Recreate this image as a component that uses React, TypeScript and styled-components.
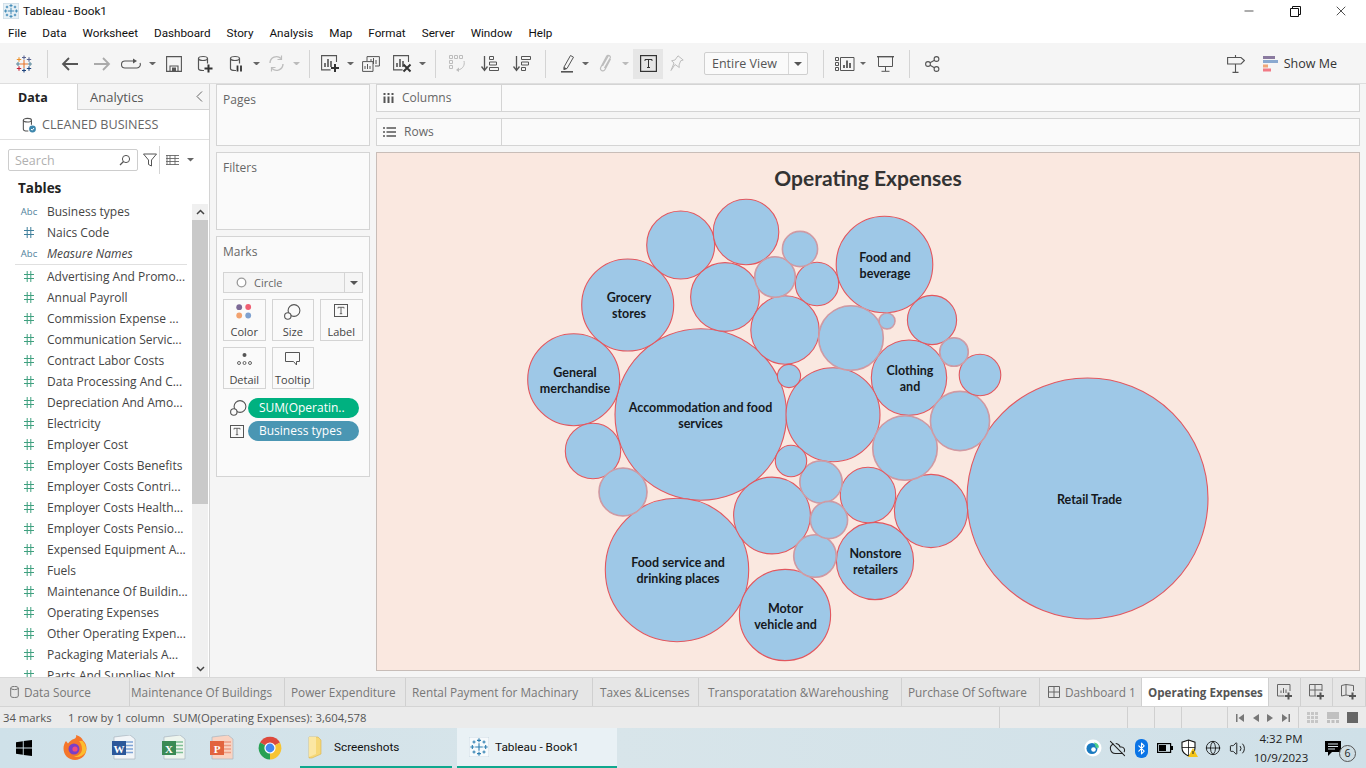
import React from 'react';
import styled, { createGlobalStyle } from 'styled-components';
import { Bluetooth, CloudOff, Globe, Volume2, Minus, X } from 'lucide-react';

const GlobalStyle = createGlobalStyle`
  html, body { margin: 0; padding: 0; background: #fff; }
  * { box-sizing: border-box; }
  body { font-family: 'Open Sans', 'Noto Sans', sans-serif; font-size: 12px; color: #333; }
`;

const Page = styled.div`
  width: 1366px; height: 768px; display: flex; flex-direction: column; overflow: hidden;
`;

/* ---------- window chrome ---------- */
const TitleBar = styled.div`
  height: 22px; display: flex; align-items: center; padding-left: 3px; background: #fff; color: #111;
  font-family: Roboto, sans-serif; font-size: 11.8px;
  & > svg { margin-right: 4px; }
`;
const WindowControls = styled.div`margin-left: auto; display: flex; height: 22px; padding-right: 2px;`;
const WindowButton = styled.div`width: 46px; display: flex; align-items: center; justify-content: center;`;
const MenuBar = styled.div`
  height: 21px; display: flex; align-items: center; padding-left: 8px; gap: 16px; background: #fff; color: #111;
  font-family: Roboto, sans-serif; font-size: 11.7px;
`;

const Toolbar = styled.div`height: 41px; display: flex; align-items: center; background: #f5f5f5; border-bottom: 1px solid #dedede; padding: 1px 29px 0 0;`;
const Tool = styled.div<{ $w: number; $active?: boolean }>`
  width: ${p => p.$w}px; height: 30px; flex: none; display: flex; align-items: center; justify-content: center;
  background: ${p => (p.$active ? '#e6e6e6' : 'transparent')};
`;
const Gap = styled.div<{ $w: number }>`width: ${p => p.$w}px; flex: none;`;
const Sep = styled.div`width: 1px; height: 28px; background: #d4d4d4; flex: none;`;
const ViewSelect = styled.div`
  width: 104px; height: 23px; flex: none; display: flex; background: #fafafa; border: 1px solid #cfcfcf; border-radius: 2px;
  color: #555; font-size: 12.5px; line-height: 21px;
`;
const ViewSelectText = styled.div`width: 84px; padding-left: 7px; border-right: 1px solid #d8d8d8;`;
const ViewSelectArrow = styled.div`flex: 1; display: flex; align-items: center; justify-content: center;`;
const ToolbarRight = styled.div`margin-left: auto; display: flex; align-items: center; color: #333; font-size: 12.5px;`;
const ShowMe = styled.div`display: flex; align-items: center; gap: 6px; margin-left: 18px;`;

/* ---------- workspace ---------- */
const Main = styled.div`flex: 1; display: flex; min-height: 0; background: #f5f5f5;`;
const DataPane = styled.div`width: 210px; flex: none; display: flex; flex-direction: column; background: #fff; border-right: 1px solid #d4d4d4;`;
const PaneTabs = styled.div`height: 26px; display: flex;`;
const PaneTab = styled.div<{ $w?: number; $active?: boolean }>`
  width: ${p => (p.$w ? `${p.$w}px` : 'auto')}; flex: ${p => (p.$w ? 'none' : 1)};
  display: flex; align-items: center;
  padding-left: ${p => (p.$active ? 18 : 12)}px;
  font-size: ${p => (p.$active ? 12.5 : 13)}px;
  font-weight: ${p => (p.$active ? 700 : 400)}; color: ${p => (p.$active ? '#222' : '#555')};
  background: ${p => (p.$active ? '#fff' : '#f5f5f5')};
  border-left: ${p => (p.$active ? 'none' : '1px solid #d4d4d4')};
  border-bottom: ${p => (p.$active ? 'none' : '1px solid #d4d4d4')};
`;
const Collapse = styled.div`margin-left: auto; margin-right: 6px; display: flex;`;
const Connection = styled.div`height: 30px; display: flex; align-items: center; padding-left: 22px; gap: 5px; border-bottom: 1px solid #e0e0e0; color: #666; font-size: 12.6px;`;
const SearchRow = styled.div`height: 41px; display: flex; align-items: center; padding: 0 0 1px 8px;`;
const SearchBox = styled.div`
  width: 130px; height: 22px; display: flex; align-items: center; justify-content: space-between; padding: 0 6px;
  border: 1px solid #cdcdcd; border-radius: 2px; color: #b0b0b0; font-size: 12.5px;
`;
const SearchTools = styled.div`display: flex; align-items: center; margin-left: 3px;`;
const TablesHeading = styled.div`height: 20px; padding-left: 18px; margin-top: -5px; line-height: 24px; font-size: 13.5px; font-weight: 700; color: #222;`;
const FieldsArea = styled.div`flex: 1; min-height: 0; display: flex; overflow: hidden; margin-top: 5px;`;
const FieldList = styled.div`flex: 1; min-width: 0; overflow: hidden;`;
const FieldRow = styled.div<{ $italic?: boolean }>`
  height: 21px; display: flex; align-items: center; color: #444; white-space: nowrap; font-size: 12px;
  font-style: ${p => (p.$italic ? 'italic' : 'normal')};
`;
const FieldIcon = styled.span<{ $color: string; $abc?: boolean }>`
  width: 47px; flex: none; display: flex; justify-content: center; padding-left: 15px; padding-right: 4px; color: ${p => p.$color};
  font-size: 9.5px; font-style: normal; font-weight: 500;
`;
const FieldDivider = styled.div`height: 2px; width: 172px; margin-left: 15px; position: relative; &::after { content: ''; position: absolute; left: 0; right: 0; top: 0; height: 1px; background: #e0e0e0; }`;
const Scrollbar = styled.div`width: 16px; flex: none; background: #f0f0f0; margin-right: 1px; display: flex; flex-direction: column; align-items: center; margin-top: 3px;`;
const ScrollArrow = styled.div`height: 16px; display: flex; align-items: center; justify-content: center; flex: none;`;
const ScrollThumb = styled.div`width: 100%; height: 284px; background: #c9c9c9; flex: none;`;
const ScrollFill = styled.div`flex: 1;`;

const CardsColumn = styled.div`width: 160px; flex: none; padding: 0 0 0 6px; display: flex; flex-direction: column; gap: 6px;`;
const Card = styled.div<{ $h: number }>`
  width: 154px; height: ${p => p.$h}px; background: #fafafa; border: 1px solid #d4d4d4; padding: 8px 6px; color: #666; font-size: 12px; flex: none;
`;
const CardTitle = styled.div`padding-left: 0; line-height: 14px;`;
const MarkSelect = styled.div`
  margin-top: 13px; height: 21px; display: flex; align-items: center; background: #f5f5f5; border: 1px solid #d4d4d4; color: #666; font-size: 11px;
`;
const MarkSelectBody = styled.div`flex: 1; display: flex; align-items: center; gap: 7px; padding-left: 12px; height: 100%;`;
const MarkSelectArrow = styled.div`width: 18px; height: 100%; border-left: 1px solid #d4d4d4; display: flex; align-items: center; justify-content: center;`;
const MarkGrid = styled.div`display: grid; grid-template-columns: repeat(3, 42.5px); column-gap: 6px; row-gap: 6px; margin-top: 6px;`;
const MarkButton = styled.div`
  height: 42px; border: 1px solid #d4d4d4; display: flex; flex-direction: column; align-items: center; justify-content: space-between;
  padding: 4px 0 1px; font-size: 11px; color: #444; background: #fafafa; line-height: 14px;
`;
const PillRow = styled.div`display: flex; align-items: center; height: 20px; margin-top: 3px; &:first-of-type { margin-top: 0; }`;
const PillIcon = styled.div`width: 25px; padding-left: 7px; flex: none; display: flex; align-items: center;`;
const Pill = styled.div<{ $color: string }>`
  width: 111px; height: 20px; border-radius: 10px; background: ${p => p.$color}; color: #fff; font-size: 12px; line-height: 19px; padding-left: 11px; white-space: nowrap;
`;
const Pills = styled.div`margin-top: 9px;`;

const ViewColumn = styled.div`flex: 1; min-width: 0; padding: 0 6px; display: flex; flex-direction: column; gap: 6px;`;
const Shelf = styled.div`height: 28px; display: flex; background: #fafafa; border: 1px solid #d4d4d4; flex: none;`;
const ShelfLabel = styled.div`width: 125px; display: flex; align-items: center; gap: 8px; padding: 0 0 1px 6px; border-right: 1px solid #d4d4d4; color: #666; font-size: 12px;`;
const Viz = styled.div`height: 519px; flex: none; background: #fae8e0; border: 1px solid #c8bdb8; display: flex; flex-direction: column; overflow: hidden;`;
const VizTitle = styled.div`height: 45px; flex: none; text-align: center; font-family: Lato, 'Open Sans', sans-serif; font-weight: 700; font-size: 21px; line-height: 50px; color: #333;`;
const BubbleChart = styled.svg`display: block; flex: 1; width: 100%; min-height: 0;`;
const BubbleLabel = styled.text`font-family: Lato, 'Open Sans', sans-serif; font-weight: 700; font-size: 12.5px; fill: #15191d; text-anchor: middle;`;

/* ---------- sheet tabs + status ---------- */
const SheetTabs = styled.div`height: 30px; display: flex; background: #e6e6e6; border-top: 1px solid #d8d8d8; border-bottom: 1px solid #d4d4d4;`;
const SheetTab = styled.div<{ $w: number; $pad: number; $active?: boolean }>`
  width: ${p => p.$w}px; flex: none; display: flex; align-items: center; gap: 5px; white-space: nowrap; overflow: hidden;
  padding-left: ${p => p.$pad}px; border-right: 1px solid #d0d0d0;
  font-size: ${p => (p.$active ? 11.6 : 11.8)}px;
  background: ${p => (p.$active ? '#fff' : 'transparent')}; color: ${p => (p.$active ? '#555' : '#777')};
  font-weight: ${p => (p.$active ? 700 : 400)};
`;
const AddTab = styled.div<{ $w: number }>`width: ${p => p.$w}px; flex: none; display: flex; align-items: center; justify-content: center; border-right: 1px solid #d0d0d0;`;
const StatusBar = styled.div`height: 21px; display: flex; background: #ebebeb; font-size: 11.3px; color: #555;`;
const StatusMain = styled.div`width: 999px; flex: none; display: flex; align-items: center; padding-left: 3px;`;
const StatusText = styled.span<{ $w?: number }>`width: ${p => (p.$w ? `${p.$w}px` : 'auto')}; white-space: nowrap; flex: none;`;
const StatusCell = styled.div<{ $w: number }>`
  width: ${p => p.$w}px; flex: none; border-left: 1px solid #d0d0d0; display: flex; align-items: center; justify-content: space-evenly;
`;
const NavGlyph = styled.div<{ $size: number; $color: string }>`width: ${p => p.$size}px; height: ${p => p.$size}px; background: ${p => p.$color};`;

/* ---------- taskbar ---------- */
const Taskbar = styled.div`height: 40px; display: flex; background: linear-gradient(90deg, #cfe1e9 0%, #d8e5ea 45%, #cfe0e8 100%); color: #111;`;
const TaskIcon = styled.div<{ $w: number }>`width: ${p => p.$w}px; flex: none; display: flex; align-items: center; justify-content: center;`;
const TaskWindow = styled.div<{ $w: number; $open?: boolean; $pad: number; $gap: number }>`
  width: ${p => p.$w}px; flex: none; display: flex; align-items: center; gap: ${p => p.$gap}px; padding-left: ${p => p.$pad}px;
  font-family: Roboto, sans-serif; font-size: 11.8px;
  background: ${p => (p.$open ? '#e9f1f5' : 'transparent')}; border-bottom: 2px solid #10a88e; margin-right: 5px;
`;
const Tray = styled.div`margin-left: auto; display: flex; align-items: center; height: 100%;`;
const TrayIcon = styled.div`width: 24px; display: flex; align-items: center; justify-content: center;`;
const BluetoothBadge = styled.div`width: 13px; height: 19px; border-radius: 6px; background: #0a74e6; display: flex; align-items: center; justify-content: center;`;
const Clock = styled.div`width: 64px; text-align: center; font-size: 11.5px; line-height: 19px; color: #222;`;
const Notify = styled.div`width: 53px; padding-left: 12px; display: flex; align-items: center; position: relative; height: 100%;`;
const NotifyBadge = styled.div`
  position: absolute; left: 26px; top: 17px; width: 17px; height: 17px; border-radius: 50%; background: #cfdde3; border: 1px solid #555;
  font-size: 10.5px; line-height: 15px; text-align: center; color: #222;
`;

/* ---------- icons ---------- */
const G = '#555';
const L = '#bdbdbd';

const Caret = ({ color = '#666', size = 3.5 }: { color?: string; size?: number }) => (
  <svg width={size * 2} height={size} viewBox="0 0 8 4"><path d="M0 0h8L4 4z" fill={color} /></svg>
);

const Plus = ({ x, y, s = 4, w = 2, c = '#333' }: { x: number; y: number; s?: number; w?: number; c?: string }) => (
  <path d={`M${x - s} ${y}h${s * 2}M${x} ${y - s}v${s * 2}`} stroke={c} strokeWidth={w} fill="none" />
);

const Hash = ({ color }: { color: string }) => (
  <svg width="10" height="11" viewBox="0 0 10 11"><path d="M3.200 0v11M6.800 0v11M0 3.500h10M0 7.500h10" stroke={color} strokeWidth="1" fill="none" /></svg>
);

const TableauColor = () => {
  const marks: [number, number, number, string][] = [
    [9, 9, 4, '#e8762d'], [9, 2.5, 2, '#5b6591'], [9, 15.5, 2, '#1f457e'], [3, 9, 2, '#5b879b'], [15, 9, 2, '#59879b'],
    [4, 4.5, 2.2, '#eb912c'], [14, 4.5, 2.2, '#5b6591'], [4, 13.5, 2.2, '#c72035'], [14, 13.5, 2.2, '#1f457e'],
  ];
  return (
    <svg width="18" height="18" viewBox="0 0 18 18">
      {marks.map(([x, y, s, c], i) => <Plus key={i} x={x} y={y} s={s} w={1.1} c={c} />)}
    </svg>
  );
};

const TableauBlue = ({ size = 16, tile }: { size?: number; tile?: boolean }) => (
  <svg width={size} height={size} viewBox="0 0 18 18">
    {tile && <rect x="0" y="0" width="18" height="18" fill="#f6fafc" stroke="#b9cdd8" strokeWidth="0.6" />}
    {!tile && <rect x="0.5" y="0.5" width="17" height="17" fill="#e8f1f6" stroke="#cfdfe8" />}
    {[[9, 9, 3.4], [9, 3, 1.8], [9, 15, 1.8], [3, 9, 1.8], [15, 9, 1.8], [4.5, 4.5, 1.4], [13.5, 4.5, 1.4], [4.5, 13.5, 1.4], [13.5, 13.5, 1.4]].map(([x, y, s], i) => (
      <Plus key={i} x={x} y={y} s={s} w={1} c="#2f7fb0" />
    ))}
  </svg>
);

const Cylinder = ({ color = G }: { color?: string }) => (
  <g fill="none" stroke={color} strokeWidth="1.2">
    <ellipse cx="6" cy="3.5" rx="4.5" ry="2" />
    <path d="M1.5 3.5v10c0 1.2 2 2 4.5 2h1M10.5 3.5v5" />
  </g>
);

const icons = {
  back: <svg width="18" height="14" viewBox="0 0 18 14"><path d="M17 7H2M8 1 2 7l6 6" fill="none" stroke="#555" strokeWidth="1.8" /></svg>,
  forward: <svg width="18" height="14" viewBox="0 0 18 14"><path d="M1 7h15M10 1l6 6-6 6" fill="none" stroke="#aaa" strokeWidth="1.8" /></svg>,
  loop: <svg width="20" height="12" viewBox="0 0 20 12"><path d="M13 3H4a3.5 3.5 0 0 0 0 7h12a3.5 3.5 0 0 0 3-5" fill="none" stroke={G} strokeWidth="1.1" /><path d="M12 0.5 16 3l-4 2.5z" fill={G} /></svg>,
  save: <svg width="16" height="16" viewBox="0 0 16 16"><path d="M.6.6h14.8v14.8H.6z" fill="none" stroke={G} strokeWidth="1.1" /><path d="M4 15V10h8v5" fill="none" stroke={G} strokeWidth="1.1" /><rect x="6" y="11.5" width="4" height="3.5" fill={G} /></svg>,
  dsAdd: <svg width="16" height="18" viewBox="0 0 16 18"><Cylinder /><Plus x={11.5} y={13.5} /></svg>,
  dsPause: <svg width="14" height="18" viewBox="0 0 14 18"><Cylinder /><path d="M8.5 10.5v6M12 10.5v6" stroke="#333" strokeWidth="1.8" /></svg>,
  refresh: <svg width="17" height="17" viewBox="0 0 17 17"><path d="M2 8a6.5 6.5 0 0 1 11-4.5M15 9a6.5 6.5 0 0 1-11 4.5" fill="none" stroke={L} strokeWidth="1.4" /><path d="M13.5.5v4h-4M3.5 16.500v-4h4" fill="none" stroke={L} strokeWidth="1.2" /></svg>,
  wsAdd: <svg width="19" height="18" viewBox="0 0 19 18"><path d="M15.500 7V.6H.6v14.300h9" fill="none" stroke={G} strokeWidth="1.1" /><path d="M4 12V8M7 12V4M10 12V6" stroke={G} strokeWidth="1.6" /><Plus x={14} y={13} /></svg>,
  wsDup: <svg width="18" height="16" viewBox="0 0 18 16"><path d="M5 5V.6h12.400v9.400H13" fill="none" stroke={G} strokeWidth="1" /><path d="M.6 5.600h10.400v9.800H.6z" fill="#f5f5f5" stroke={G} strokeWidth="1" /><path d="M9 5V3M11.500 8V2M14 8V4M3 13V10M5.500 13V8M8 13V10" stroke={G} strokeWidth="1" /></svg>,
  wsClear: <svg width="19" height="18" viewBox="0 0 19 18"><path d="M15.500 7V.6H.6v14.300h9" fill="none" stroke={G} strokeWidth="1.1" /><path d="M4 12V8M7 12V4M10 12V6" stroke={G} strokeWidth="1.600" /><path d="m10.500 9.500 7 7M17.500 9.500l-7 7" stroke="#333" strokeWidth="2" /></svg>,
  swap: <svg width="17" height="18" viewBox="0 0 17 18"><g fill="none" stroke={L} strokeWidth="1"><path d="M.5.500h3v3h-3zM5.500.500h3v3h-3zM10.500.500h3v3h-3zM.5 5.500h3v3h-3zM.5 10.500h3v3h-3z" /><path d="M15 6c1 4-1 8-6 9" /></g><path d="m10 12.500-3 2.500 3 2z" fill={L} /></svg>,
  sortAsc: <svg width="18" height="17" viewBox="0 0 18 17"><path d="M3.500 1v14M.5 11.500l3 4 3-4" fill="none" stroke={G} strokeWidth="1.300" /><path d="M8.500 1.500h4v3h-4zM8.500 7h7v3h-7zM8.500 12.500h9v3h-9z" fill="none" stroke={G} /></svg>,
  sortDesc: <svg width="18" height="17" viewBox="0 0 18 17"><path d="M3.500 1v14M.5 11.500l3 4 3-4" fill="none" stroke={G} strokeWidth="1.300" /><path d="M8.500 1.500h9v3h-9zM8.500 7h7v3h-7zM8.500 12.500h4v3h-4z" fill="none" stroke={G} /></svg>,
  pen: <svg width="14" height="19" viewBox="0 0 14 19"><path d="M3 13 9.500 1.500l3 1.700L6 14.500l-3 1z" fill="none" stroke={G} /><path d="M2.500 16 3 13l3 1.500z" fill={G} /><rect x="0" y="17" width="12" height="1.600" fill={G} /></svg>,
  clip: <svg width="13" height="19" viewBox="0 0 13 19"><path d="M11.500 5 6 15.500c-1.400 2.600-5.600 1-4.300-2L7.500 2.500c1.100-2 4.700-.7 3.700 1.500L5.500 14M9.500 1.500 3.500 12" fill="none" stroke={L} strokeWidth="1.200" /></svg>,
  text: <svg width="17" height="17" viewBox="0 0 17 17"><rect x=".6" y=".6" width="15.800" height="15.800" fill="none" stroke="#333" strokeWidth="1.200" /><path d="M5 6V4.500h7V6M8.500 4.500v8M7 12.500h3" fill="none" stroke="#333" /></svg>,
  pin: <svg width="14" height="17" viewBox="0 0 14 17"><path d="M8 .8 13.200 5l-2.500.8-1.700 4.200.3 2.500L5 9.500 1 15.500 4 8 1.600 5.800l3.400-.8z" fill="none" stroke={L} /></svg>,
  showMe: <svg width="20" height="14" viewBox="0 0 20 14"><path d="M.5.500h3v3h-3zM.5 5.500h3v3h-3zM.5 10.500h3v3h-3zM5.500.500h13.500v13h-13.500z" fill="none" stroke={G} /><path d="M9 11V8M12 11V3.500M15 11V6" stroke={G} strokeWidth="1.800" /></svg>,
  present: <svg width="17" height="16" viewBox="0 0 17 16"><path d="M0 .7h17" stroke={G} strokeWidth="1.400" /><path d="M1.500 1v9.500h14V1M8.500 10.500v4.500M4.500 15.300h8" fill="none" stroke={G} /></svg>,
  share: <svg width="15" height="16" viewBox="0 0 15 16"><g fill="none" stroke={G} strokeWidth="1.100"><circle cx="11.500" cy="3" r="2.400" /><circle cx="3" cy="8" r="2.400" /><circle cx="11.500" cy="13" r="2.400" /><path d="m5 6.800 4.500-2.600M5 9.200l4.500 2.600" /></g></svg>,
  sign: <svg width="18" height="18" viewBox="0 0 18 18"><path d="M.6 2.500h13.400l3.400 3-3.400 3.500H.6z" fill="none" stroke={G} strokeWidth="1.100" /><path d="M8.500 0v2.500M8.500 9v8M5.500 17.400h6" stroke={G} strokeWidth="1.100" /></svg>,
  showMeColor: (
    <svg width="15" height="16" viewBox="0 0 15 16">
      <rect x="0" y="0" width="12" height="3" fill="#8a7a9f" /><rect x="0" y="4" width="15" height="3" fill="#8aa9d0" />
      <rect x="0" y="8.500" width="5" height="3" fill="#f0a678" /><rect x="0" y="12.500" width="8" height="3" fill="#f27a85" />
    </svg>
  ),
  dsCheck: <svg width="15" height="16" viewBox="0 0 15 16"><g transform="scale(0.9)"><Cylinder /></g><circle cx="10.500" cy="12" r="3.400" fill="#3d87ad" /><path d="m9 12 1.200 1.200L12 11" stroke="#fff" fill="none" /></svg>,
  search: <svg width="12" height="12" viewBox="0 0 12 12"><circle cx="7" cy="5" r="3.600" fill="none" stroke={G} /><path d="M4.500 7.500 1 11" stroke={G} strokeWidth="1.300" /></svg>,
  filter: <svg width="14" height="14" viewBox="0 0 14 14"><path d="M.5 1h13L8.500 7v6l-3-1.500V7z" fill="none" stroke={G} /></svg>,
  list: <svg width="13" height="10" viewBox="0 0 13 10"><path d="M0 .5h13M0 3.500h13M0 6.500h13M0 9.500h13M1 0v10M4 0v10M9 0v10" stroke="#666" strokeWidth=".9" fill="none" /></svg>,
  circle: <svg width="11" height="11" viewBox="0 0 11 11"><circle cx="5.500" cy="5.500" r="4.300" fill="#fff" stroke="#999" strokeWidth="1.300" /></svg>,
  colorDots: <svg width="16" height="15" viewBox="0 0 16 15"><circle cx="3.200" cy="3.200" r="2.900" fill="#7c6a96" /><circle cx="12.200" cy="3" r="2.900" fill="#ef5f73" /><circle cx="3.200" cy="11.500" r="2.900" fill="#f2a26f" /><circle cx="12.200" cy="11.500" r="2.900" fill="#7ea1cf" /></svg>,
  size: <svg width="17" height="16" viewBox="0 0 17 16"><g fill="none" stroke={G} strokeWidth="1.100"><circle cx="10" cy="6.500" r="5.900" /><circle cx="3.800" cy="12" r="3.200" fill="#fafafa" /></g></svg>,
  smallT: <svg width="14" height="13" viewBox="0 0 14 13"><rect x=".5" y=".5" width="13" height="12" fill="none" stroke={G} /><path d="M4 4.500V3.300h6v1.200M7 3.300v6.400M5.800 9.700h2.400" fill="none" stroke={G} strokeWidth=".9" /></svg>,
  detail: <svg width="15" height="14" viewBox="0 0 15 14"><circle cx="7.500" cy="3" r="2" fill={G} /><g fill="none" stroke={G} strokeWidth=".9"><circle cx="2" cy="11" r="1.500" /><circle cx="7.500" cy="11" r="1.500" /><circle cx="13" cy="11" r="1.500" /></g></svg>,
  tooltip: <svg width="15" height="14" viewBox="0 0 15 14"><path d="M.5.500h14v9h-3v3.500l-3-3.500h-8z" fill="none" stroke={G} /></svg>,
  columns: <svg width="11" height="10" viewBox="0 0 11 10"><path d="M1.500 0v2M5.500 0v2M9.500 0v2" stroke="#555" strokeWidth="2" /><path d="M1.500 3.500V10M5.500 3.500V10M9.500 3.500V10" stroke="#555" strokeWidth="2" /></svg>,
  rows: <svg width="13" height="10" viewBox="0 0 13 10"><path d="M0 1h2M0 5h2M0 9h2M3.500 1H13M3.500 5H13M3.500 9H13" stroke="#555" strokeWidth="1.700" /></svg>,
  tabCyl: <svg width="9" height="12" viewBox="0 0 9 12"><ellipse cx="4.500" cy="2" rx="3.800" ry="1.600" fill="none" stroke="#777" /><path d="M.7 2v8c0 1 1.700 1.500 3.800 1.500s3.800-.5 3.800-1.500V2" fill="none" stroke="#777" /></svg>,
  dash: <svg width="12" height="12" viewBox="0 0 12 12"><path d="M.5.500h11v11H.5zM.5 6h11M6 .5v11" fill="none" stroke="#666" /></svg>,
  addSheet: <svg width="16" height="16" viewBox="0 0 16 16"><path d="M13 7V.5H.5v11.500h7" fill="none" stroke="#666" /><path d="M4 9V6.500M6.500 9V4M9 9V5.500" stroke="#666" /><Plus x={11.500} y={12} s={3.500} c="#555" /></svg>,
  addDash: <svg width="16" height="16" viewBox="0 0 16 16"><path d="M13 7V.5H.5v11.500h7M.5 6H13M6 .5V12" fill="none" stroke="#666" /><Plus x={11.500} y={12} s={3.500} c="#555" /></svg>,
  addStory: <svg width="16" height="16" viewBox="0 0 16 16"><path d="M.5 1.500 5 .5v10.500l-4.500 1zM5 .5l7.500 1V7M5 11l3 .5" fill="none" stroke="#666" /><Plus x={11.500} y={12} s={3.500} c="#555" /></svg>,
};

const WindowsLogo = () => (
  <svg width="16" height="16" viewBox="0 0 16 16"><path d="M0 2.200 6.800 1.200v6.300H0zM7.700 1.100 16 0v7.500H7.700zM0 8.400h6.800v6.400L0 13.800zM7.700 8.400H16V16l-8.300-1.100z" fill="#000" /></svg>
);
const Firefox = () => (
  <svg width="24" height="26" viewBox="0 0 24 26">
    <path d="M12 25C5.500 25 .5 20 .5 13.500c0-3 1-5.500 2.500-7.500L5 8.500C7 6 9 4.500 11 4c0 0 3-1 2-4 4 1 6 3 7 5.500 2 1.500 3.500 4.500 3.500 8C23.500 20 18.500 25 12 25z" fill="#f5762a" />
    <path d="M19.500 6c3 3 4.500 7 3 11.500C20 21 15 23 11 21.500 16 21 19 18 19 14c0-3-1-6-3-8z" fill="#fcbd2e" />
    <circle cx="11" cy="14" r="5.500" fill="#7a3fc6" /><circle cx="12" cy="14" r="2.600" fill="#f04a7f" />
  </svg>
);
const OfficeDoc = ({ main, paper, line, letter }: { main: string; paper: string; line: string; letter: string }) => (
  <svg width="25" height="26" viewBox="0 0 25 26">
    <path d="M3 2 19 0l5 4v20L3 24z" fill={paper} stroke="#a9b4bf" strokeWidth=".7" />
    <path d="M14 7h8M14 10.500h8M14 14h8M14 17.500h8" stroke={line} strokeWidth="1.300" />
    <rect x="1" y="6" width="14" height="14" fill={main} />
    <text x="8" y="17.500" textAnchor="middle" fontSize="11" fontWeight="700" fill="#fff" fontFamily="Liberation Serif, serif">{letter}</text>
  </svg>
);
const Chrome = () => (
  <svg width="24" height="24" viewBox="0 0 24 24">
    <path d="M12 12 2 6.500A11.500 11.500 0 0 1 22 6.500z" fill="#dd4a3d" />
    <path d="M12 12 12 23.500A11.500 11.500 0 0 0 22 6.500z" fill="#f7c432" />
    <path d="M12 12 2 6.500A11.500 11.500 0 0 0 12 23.500z" fill="#27a153" />
    <circle cx="12" cy="12" r="5.600" fill="#fff" /><circle cx="12" cy="12" r="4.400" fill="#4287f0" />
  </svg>
);
const Folder = () => (
  <svg width="14" height="24" viewBox="0 0 14 24"><path d="M1 2h9l3 3v14l-9 4H1z" fill="#f6d877" stroke="#d9b14d" strokeWidth=".6" /><path d="M1 2h7v17l-7 3z" fill="#fbe7a3" /></svg>
);
const Edge = () => (
  <svg width="18" height="18" viewBox="0 0 18 18"><circle cx="9" cy="9" r="8.500" fill="#fff" /><circle cx="8" cy="9.500" r="5.500" fill="#1a7ac0" /><circle cx="9.500" cy="10.500" r="2.300" fill="#fff" /><path d="M10 3.500a5.500 5.500 0 0 1 5 5l-3 .5z" fill="#4fcf8a" /></svg>
);
const BatteryIcon = () => (
  <svg width="16" height="10" viewBox="0 0 16 10"><rect x=".6" y=".6" width="13" height="8.800" fill="none" stroke="#000" strokeWidth="1.200" /><rect x="2" y="2" width="7" height="6" fill="#000" /><rect x="14" y="3" width="2" height="4" fill="#000" /></svg>
);
const ShieldWarn = () => (
  <svg width="17" height="18" viewBox="0 0 17 18"><path d="M7.500 1 14 3.200V9c0 4-3 6.500-6.500 8C4 15.500 1 13 1 9V3.200z" fill="#fff" stroke="#111" strokeWidth="1.100" /><path d="M7.500 1v16M1 8.500h13" stroke="#111" strokeWidth=".8" /><path d="M12 9l5 9H7z" fill="#f5c518" /><path d="M12 12v3" stroke="#222" /></svg>
);
const MessageIcon = () => (
  <svg width="16" height="15" viewBox="0 0 16 15"><path d="M0 0h16v11H7l-4 4v-4H0z" fill="#000" /><path d="M3 3h10M3 5.500h10M3 8h7" stroke="#d5e3ea" /></svg>
);

/* ---------- data ---------- */
const FIELDS = [
  'Advertising And Promo...', 'Annual Payroll', 'Commission Expense ...', 'Communication Servic...', 'Contract Labor Costs',
  'Data Processing And C...', 'Depreciation And Amo...', 'Electricity', 'Employer Cost', 'Employer Costs Benefits',
  'Employer Costs Contri...', 'Employer Costs Health...', 'Employer Costs Pensio...', 'Expensed Equipment A...', 'Fuels',
  'Maintenance Of Buildin...', 'Operating Expenses', 'Other Operating Expen...', 'Packaging Materials A...', 'Parts And Supplies Not...',
];

// [cx, cy, r, soft edge]
const BUBBLES: [number, number, number, boolean?][] = [
  [1087.5, 498.5, 120.5], [700.8, 414.5, 85.8], [677, 570, 71.7], [884.5, 264.5, 48.3], [627.7, 305, 46], [573.7, 379.7, 46],
  [785, 615, 45.6], [875, 561, 38.6], [909, 377.7, 37.7], [833, 414.7, 47], [772, 515.5, 38.4], [931, 511, 36.6],
  [680.7, 245, 34], [746, 232, 32.8], [725, 297, 34.4], [785, 330, 34.2], [851, 338, 32, true], [905, 448, 32, true],
  [960, 421, 29.3, true], [593, 451, 27.7], [868, 495, 27.7], [932, 320, 24.6], [623, 492, 23.7, true], [817, 284, 21.7],
  [775, 277, 20, true], [980, 375, 20.8], [821, 482, 20.9, true], [815, 556, 21, true], [829, 520, 18.3, true],
  [800, 249, 17.3, true], [791, 461, 15.7], [954, 352, 14, true], [789, 376, 11.6], [887, 321, 7.7, true],
];

const LABELS: [number, number, string][] = [
  [885, 262, 'Food and'], [885, 278, 'beverage'], [629, 302, 'Grocery'], [629, 318, 'stores'], [575, 377, 'General'], [575, 393, 'merchandise'],
  [700.5, 412, 'Accommodation and food'], [700.5, 428, 'services'], [910, 375, 'Clothing'], [910, 391, 'and'],
  [678, 567, 'Food service and'], [678, 583, 'drinking places'], [875.5, 558, 'Nonstore'], [875.5, 574, 'retailers'],
  [785.5, 613, 'Motor'], [785.5, 629, 'vehicle and'], [1089.5, 504, 'Retail Trade'],
];

const App: React.FC = () => (
  <Page>
    <GlobalStyle />
    <TitleBar>
      <TableauBlue />
      Tableau - Book1
      <WindowControls>
        <WindowButton><Minus size={14} color="#111" strokeWidth={1.2} /></WindowButton>
        <WindowButton>
          <svg width="11" height="11" viewBox="0 0 11 11"><path d="M.5 2.500h8v8h-8zM2.500 2.500v-2h8v8h-2" fill="none" stroke="#111" /></svg>
        </WindowButton>
        <WindowButton><X size={16} color="#111" strokeWidth={1.1} /></WindowButton>
      </WindowControls>
    </TitleBar>
    <MenuBar>
      {['File', 'Data', 'Worksheet', 'Dashboard', 'Story', 'Analysis', 'Map', 'Format', 'Server', 'Window', 'Help'].map(m => <span key={m}>{m}</span>)}
    </MenuBar>

    <Toolbar>
      <Tool $w={47}><TableauColor /></Tool>
      <Sep />
      <Gap $w={6} />
      <Tool $w={32}>{icons.back}</Tool>
      <Tool $w={32}>{icons.forward}</Tool>
      <Tool $w={26}>{icons.loop}</Tool>
      <Tool $w={16}><Caret /></Tool>
      <Tool $w={28}>{icons.save}</Tool>
      <Tool $w={34}>{icons.dsAdd}</Tool>
      <Tool $w={28}>{icons.dsPause}</Tool>
      <Tool $w={12}><Caret /></Tool>
      <Tool $w={28}>{icons.refresh}</Tool>
      <Tool $w={12}><Caret color="#bbb" /></Tool>
      <Gap $w={7} />
      <Sep />
      <Gap $w={8} />
      <Tool $w={24}>{icons.wsAdd}</Tool>
      <Tool $w={16}><Caret /></Tool>
      <Tool $w={26}>{icons.wsDup}</Tool>
      <Gap $w={4} />
      <Tool $w={28}>{icons.wsClear}</Tool>
      <Tool $w={12}><Caret /></Tool>
      <Gap $w={7} />
      <Sep />
      <Gap $w={7} />
      <Tool $w={28}>{icons.swap}</Tool>
      <Gap $w={5} />
      <Tool $w={28}>{icons.sortAsc}</Tool>
      <Gap $w={4} />
      <Tool $w={28}>{icons.sortDesc}</Tool>
      <Gap $w={9} />
      <Sep />
      <Gap $w={10} />
      <Tool $w={24}>{icons.pen}</Tool>
      <Tool $w={10}><Caret /></Tool>
      <Gap $w={1} />
      <Tool $w={28}>{icons.clip}</Tool>
      <Tool $w={12}><Caret color="#bbb" /></Tool>
      <Gap $w={2} />
      <Tool $w={30} $active>{icons.text}</Tool>
      <Tool $w={28}>{icons.pin}</Tool>
      <Gap $w={13} />
      <ViewSelect>
        <ViewSelectText>Entire View</ViewSelectText>
        <ViewSelectArrow><Caret size={4} color="#555" /></ViewSelectArrow>
      </ViewSelect>
      <Gap $w={15} />
      <Sep />
      <Gap $w={8} />
      <Tool $w={26}>{icons.showMe}</Tool>
      <Tool $w={10}><Caret size={3} /></Tool>
      <Gap $w={3} />
      <Tool $w={28}>{icons.present}</Tool>
      <Gap $w={10} />
      <Sep />
      <Gap $w={8} />
      <Tool $w={28}>{icons.share}</Tool>
      <ToolbarRight>
        {icons.sign}
        <ShowMe>{icons.showMeColor}Show Me</ShowMe>
      </ToolbarRight>
    </Toolbar>

    <Main>
      <DataPane>
        <PaneTabs>
          <PaneTab $w={77} $active>Data</PaneTab>
          <PaneTab>
            Analytics
            <Collapse>
              <svg width="7" height="11" viewBox="0 0 7 11"><path d="M6 .5 1 5.500l5 5" fill="none" stroke="#666" /></svg>
            </Collapse>
          </PaneTab>
        </PaneTabs>
        <Connection>{icons.dsCheck}CLEANED BUSINESS</Connection>
        <SearchRow>
          <SearchBox>Search{icons.search}</SearchBox>
          <SearchTools>
            <Tool $w={18}>{icons.filter}</Tool>
            <Sep />
            <Tool $w={24}>{icons.list}</Tool>
            <Tool $w={12}><Caret /></Tool>
          </SearchTools>
        </SearchRow>
        <TablesHeading>Tables</TablesHeading>
        <FieldsArea>
          <FieldList>
            <FieldRow><FieldIcon $color="#4f7f9b" $abc>Abc</FieldIcon>Business types</FieldRow>
            <FieldRow><FieldIcon $color="#3f7f9b"><Hash color="#3f7f9b" /></FieldIcon>Naics Code</FieldRow>
            <FieldRow $italic><FieldIcon $color="#4f7f9b" $abc>Abc</FieldIcon>Measure Names</FieldRow>
            <FieldDivider />
            {FIELDS.map(f => <FieldRow key={f}><FieldIcon $color="#3fa07f"><Hash color="#3fa07f" /></FieldIcon>{f}</FieldRow>)}
          </FieldList>
          <Scrollbar>
            <ScrollArrow><svg width="9" height="6" viewBox="0 0 9 6"><path d="m1 5 3.500-3.500L8 5" fill="none" stroke="#444" strokeWidth="1.500" /></svg></ScrollArrow>
            <ScrollThumb />
            <ScrollFill />
            <ScrollArrow><svg width="9" height="6" viewBox="0 0 9 6"><path d="m1 1 3.500 3.500L8 1" fill="none" stroke="#444" strokeWidth="1.500" /></svg></ScrollArrow>
          </Scrollbar>
        </FieldsArea>
      </DataPane>

      <CardsColumn>
        <Card $h={62}><CardTitle>Pages</CardTitle></Card>
        <Card $h={78}><CardTitle>Filters</CardTitle></Card>
        <Card $h={241}>
          <CardTitle>Marks</CardTitle>
          <MarkSelect>
            <MarkSelectBody>{icons.circle}Circle</MarkSelectBody>
            <MarkSelectArrow><Caret color="#555" size={4} /></MarkSelectArrow>
          </MarkSelect>
          <MarkGrid>
            <MarkButton>{icons.colorDots}Color</MarkButton>
            <MarkButton>{icons.size}Size</MarkButton>
            <MarkButton>{icons.smallT}Label</MarkButton>
            <MarkButton>{icons.detail}Detail</MarkButton>
            <MarkButton>{icons.tooltip}Tooltip</MarkButton>
          </MarkGrid>
          <Pills>
            <PillRow><PillIcon>{icons.size}</PillIcon><Pill $color="#00b180">SUM(Operatin..</Pill></PillRow>
            <PillRow><PillIcon>{icons.smallT}</PillIcon><Pill $color="#4a96b3">Business types</Pill></PillRow>
          </Pills>
        </Card>
      </CardsColumn>

      <ViewColumn>
        <Shelf><ShelfLabel>{icons.columns}Columns</ShelfLabel></Shelf>
        <Shelf><ShelfLabel>{icons.rows}Rows</ShelfLabel></Shelf>
        <Viz>
          <VizTitle>Operating Expenses</VizTitle>
          <BubbleChart viewBox="377 198 982 472" preserveAspectRatio="xMinYMin">
            {BUBBLES.map(([x, y, r, soft], i) => (
              <g key={i}>
                {soft && <circle cx={x} cy={y} r={r} fill="none" stroke="#d99aa0" strokeWidth="2.200" />}
                <circle cx={x} cy={y} r={r} fill="#9ec8e7" stroke={soft ? '#c99aa6' : '#e2575f'} strokeWidth={soft ? 1 : 1.100} />
              </g>
            ))}
            {LABELS.map(([x, y, t]) => <BubbleLabel key={`${x}-${y}`} x={x} y={y}>{t}</BubbleLabel>)}
          </BubbleChart>
        </Viz>
      </ViewColumn>
    </Main>

    <SheetTabs>
      <SheetTab $w={130} $pad={10}>{icons.tabCyl}Data Source</SheetTab>
      <SheetTab $w={155} $pad={1}>Maintenance Of Buildings</SheetTab>
      <SheetTab $w={121} $pad={6}>Power Expenditure</SheetTab>
      <SheetTab $w={187} $pad={6}>Rental Payment for Machinary</SheetTab>
      <SheetTab $w={106} $pad={7}>Taxes &amp;Licenses</SheetTab>
      <SheetTab $w={203} $pad={9}>Transporatation &amp;Warehoushing</SheetTab>
      <SheetTab $w={138} $pad={6}>Purchase Of Software</SheetTab>
      <SheetTab $w={102} $pad={8}>{icons.dash}Dashboard 1</SheetTab>
      <SheetTab $w={127} $pad={6} $active>Operating Expenses</SheetTab>
      <AddTab $w={32}>{icons.addSheet}</AddTab>
      <AddTab $w={32}>{icons.addDash}</AddTab>
      <AddTab $w={33}>{icons.addStory}</AddTab>
    </SheetTabs>

    <StatusBar>
      <StatusMain>
        <StatusText $w={65}>34 marks</StatusText>
        <StatusText $w={105}>1 row by 1 column</StatusText>
        <StatusText>SUM(Operating Expenses): 3,604,578</StatusText>
      </StatusMain>
      <StatusCell $w={128} />
      <StatusCell $w={27} />
      <StatusCell $w={27} />
      <StatusCell $w={46} />
      <StatusCell $w={71}>
        <svg width="8" height="8" viewBox="0 0 8 8"><path d="M0 0h1.500v8H0zM8 0v8L2.500 4z" fill="#777" /></svg>
        <svg width="6" height="8" viewBox="0 0 6 8"><path d="M6 0v8L0 4z" fill="#777" /></svg>
        <svg width="6" height="8" viewBox="0 0 6 8"><path d="M0 0v8l6-4z" fill="#777" /></svg>
        <svg width="8" height="8" viewBox="0 0 8 8"><path d="M0 0v8l5.500-4zM6.500 0H8v8H6.500z" fill="#777" /></svg>
      </StatusCell>
      <StatusCell $w={68}>
        <svg width="11" height="11" viewBox="0 0 11 11"><path d="M0 0h3v3H0zM4 0h3v3H4zM8 0h3v3H8zM0 4h3v3H0zM4 4h3v3H4zM8 4h3v3H8zM0 8h3v3H0zM4 8h3v3H4zM8 8h3v3H8z" fill="#c6c6c6" /></svg>
        <svg width="12" height="11" viewBox="0 0 12 11"><path d="M0 0h12v7H0zM0 8h3v3H0zM4.500 8h3v3h-3zM9 8h3v3H9z" fill="#c0c0c0" /></svg>
        <NavGlyph $size={11} $color="#666" />
      </StatusCell>
    </StatusBar>

    <Taskbar>
      <TaskIcon $w={48}><WindowsLogo /></TaskIcon>
      <TaskIcon $w={54}><Firefox /></TaskIcon>
      <TaskIcon $w={42}><OfficeDoc main="#2b579a" paper="#f2f5f8" line="#7ea3d6" letter="W" /></TaskIcon>
      <TaskIcon $w={58}><OfficeDoc main="#3a8a55" paper="#eef5ee" line="#7fbf95" letter="X" /></TaskIcon>
      <TaskIcon $w={38}><OfficeDoc main="#e2643e" paper="#f9d3c2" line="#ee9c83" letter="P" /></TaskIcon>
      <TaskIcon $w={60}><Chrome /></TaskIcon>
      <TaskWindow $w={152} $pad={8} $gap={12}><Folder />Screenshots</TaskWindow>
      <TaskWindow $w={160} $pad={12} $gap={6} $open><TableauBlue size={20} tile />Tableau - Book1</TaskWindow>
      <Tray>
        <TrayIcon><Edge /></TrayIcon>
        <TrayIcon><CloudOff size={17} color="#222" strokeWidth={1.5} /></TrayIcon>
        <TrayIcon><BluetoothBadge><Bluetooth size={13} color="#fff" strokeWidth={2} /></BluetoothBadge></TrayIcon>
        <TrayIcon><BatteryIcon /></TrayIcon>
        <TrayIcon><ShieldWarn /></TrayIcon>
        <TrayIcon><Globe size={16} color="#111" strokeWidth={1.3} /></TrayIcon>
        <TrayIcon><Volume2 size={17} color="#111" strokeWidth={1.3} /></TrayIcon>
        <Clock>4:32 PM<br />10/9/2023</Clock>
        <Notify>
          <MessageIcon />
          <NotifyBadge>6</NotifyBadge>
        </Notify>
      </Tray>
    </Taskbar>
  </Page>
);

export default App;
